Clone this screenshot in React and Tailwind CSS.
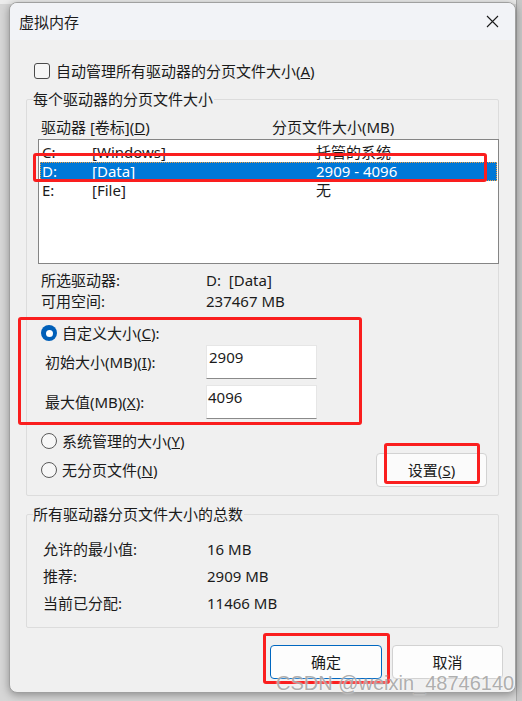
import React from 'react'

const U = ({ children }) => <span className="underline underline-offset-[1px]">{children}</span>

function Radio({ checked }) {
  return checked ? (
    <span className="w-[16px] h-[16px] rounded-full bg-[#005fb8] flex items-center justify-center shrink-0">
      <span className="w-[7px] h-[7px] rounded-full bg-white" />
    </span>
  ) : (
    <span className="w-[16px] h-[16px] rounded-full border border-[#5a5a5a] bg-[#f7f7f7] shrink-0" />
  )
}

const DRIVES = [
  { d: 'C:', label: '[Windows]', size: '托管的系统' },
  { d: 'D:', label: '[Data]', size: '2909 - 4096', sel: true },
  { d: 'E:', label: '[File]', size: '无' },
]

const TOTALS = [
  ['允许的最小值:', '16 MB'],
  ['推荐:', '2909 MB'],
  ['当前已分配:', '11466 MB'],
]

export default function App() {
  return (
    <div className="relative w-[522px] h-[701px] overflow-hidden bg-[#d6d6d6] text-[15px] text-[#1b1b1b] font-['Noto_Sans','Noto_Sans_CJK_SC',sans-serif]">
      {/* window behind */}
      <div className="absolute left-0 top-0 w-full h-[4px] bg-[#ececec]" />
      <div className="absolute right-0 top-0 w-[6px] h-full bg-[#c8c8c8] border-l border-[#a8a8a8]" />

      {/* dialog */}
      <div className="relative ml-[9px] mt-[2px] w-[507px] h-[691px] rounded-[8px] border border-[#a0a0a0] bg-[#f0f0f0] shadow-[0_2px_8px_rgba(0,0,0,0.35)] overflow-hidden">
        <div className="h-[37px] bg-[#f2f3f7] flex items-center justify-between pl-[9px] pr-[14px]">
          <span className="leading-[20px]">虚拟内存</span>
          <svg width="13" height="13" viewBox="0 0 13 13" className="mr-[2px]">
            <path d="M1 1 L12 12 M12 1 L1 12" stroke="#1b1b1b" strokeWidth="1.1" />
          </svg>
        </div>

        <div className="px-[16px]">
          <div className="mt-[21px] h-[20px] flex items-center pl-[8px]">
            <span className="w-[16px] h-[16px] rounded-[3px] border border-[#4a4a4a] bg-[#f6f6f6]" />
            <span className="ml-[6px] leading-[20px]">自动管理所有驱动器的分页文件大小(<U>A</U>)</span>
          </div>

          {/* per-drive group */}
          <div className="relative mt-[18px] h-[397px] border border-[#dcdcdc] rounded-[2px]">
            <span className="absolute -top-[11px] left-[6px] bg-[#f0f0f0] leading-[20px] pr-px">每个驱动器的分页文件大小</span>

            <div className="pt-[17px] pl-[14px] h-[37px] flex leading-[20px]">
              <span className="w-[231px]">驱动器 [卷标](<U>D</U>)</span>
              <span>分页文件大小(MB)</span>
            </div>

            <div className="mt-[2px] ml-[11px] w-[461px] h-[125px] border border-[#858585] bg-white pt-[3px]">
              {DRIVES.map(r => (
                <div key={r.d}
                  className={r.sel
                    ? 'mx-px h-[19px] flex items-center pl-px bg-[#0078d7] text-white border border-dotted border-[#f0a040]'
                    : 'mx-px h-[19px] flex items-center pl-px border border-transparent'}>
                  <span className="w-[50px] leading-[19px]">{r.d}</span>
                  <span className="w-[224px] leading-[19px]">{r.label}</span>
                  <span className="leading-[19px]">{r.size}</span>
                </div>
              ))}
            </div>

            <div className="mt-[6px] pl-[14px]">
              <div className="h-[21px] flex items-center">
                <span className="w-[165px]">所选驱动器:</span>
                <span>D:&nbsp;&nbsp;[Data]</span>
              </div>
              <div className="h-[21px] flex items-center">
                <span className="w-[165px]">可用空间:</span>
                <span>237467 MB</span>
              </div>
            </div>

            <div className="mt-[11px] pl-[14px] h-[20px] flex items-center">
              <Radio checked />
              <span className="ml-[5px] leading-[20px]">自定义大小(<U>C</U>):</span>
            </div>

            <div className="mt-[2px] pl-[18px] h-[34px] flex items-center">
              <span className="w-[161px] leading-[20px]">初始大小(MB)(<U>I</U>):</span>
              <div className="w-[111px] h-[34px] bg-white border border-[#e6e6e6] border-b-[#8a8a8a] pl-[2px] pt-[1px] leading-[20px]">2909</div>
            </div>

            <div className="mt-[6px] pl-[18px] h-[34px] flex items-center">
              <span className="w-[161px] leading-[20px]">最大值(MB)(<U>X</U>):</span>
              <div className="w-[111px] h-[34px] bg-white border border-[#e6e6e6] border-b-[#8a8a8a] pl-[1px] pt-[1px] leading-[20px]">4096</div>
            </div>

            <div className="mt-[12px] pl-[14px] h-[20px] flex items-center">
              <Radio />
              <span className="ml-[5px] leading-[20px]">系统管理的大小(<U>Y</U>)</span>
            </div>

            <div className="mt-[2px] pl-[14px] pr-[11px] h-[34px] flex items-center justify-between">
              <div className="flex items-center">
                <Radio />
                <span className="ml-[5px] leading-[20px]">无分页文件(<U>N</U>)</span>
              </div>
              <button className="w-[111px] h-[34px] rounded-[4px] border border-[#d2d2d2] bg-[#fbfbfb] leading-[20px]">
                设置(<U>S</U>)
              </button>
            </div>
          </div>

          {/* totals group */}
          <div className="relative mt-[18px] h-[114px] border border-[#dcdcdc] rounded-[2px]">
            <span className="absolute -top-[11px] left-[6px] bg-[#f0f0f0] leading-[20px] pr-px">所有驱动器分页文件大小的总数</span>
            <div className="pt-[21px] pl-[16px]">
              {TOTALS.map(([k, v]) => (
                <div key={k} className="h-[27px] flex items-center">
                  <span className="w-[164px]">{k}</span>
                  <span>{v}</span>
                </div>
              ))}
            </div>
          </div>
        </div>

        <div className="mt-[17px] pr-[12px] flex justify-end gap-[10px]">
          <button className="w-[112px] h-[34px] rounded-[4px] border border-[#0067c0] bg-[#fdfdfd] leading-[20px]">确定</button>
          <button className="w-[111px] h-[34px] rounded-[4px] border border-[#d2d2d2] bg-[#fdfdfd] leading-[20px]">取消</button>
        </div>
      </div>

      {/* annotation boxes */}
      <div className="absolute left-[33px] top-[153px] w-[454px] h-[29px] border-[3px] border-[#fa1e1e] rounded-[3px]" />
      <div className="absolute left-[18px] top-[317px] w-[344px] h-[108px] border-[3px] border-[#fa1e1e] rounded-[3px]" />
      <div className="absolute left-[384px] top-[443px] w-[96px] h-[41px] border-[3px] border-[#fa1e1e] rounded-[3px]" />
      <div className="absolute left-[263px] top-[633px] w-[127px] h-[51px] border-[3px] border-[#fa1e1e] rounded-[3px]" />

      {/* watermark */}
      <div className="absolute left-[276px] top-[670px] text-[20px] leading-[26px] text-[#9a9a9a]/80 font-['Liberation_Sans',sans-serif] [text-shadow:0_0_2px_white]">
        CSDN @weixin_48746140
      </div>
    </div>
  )
}
